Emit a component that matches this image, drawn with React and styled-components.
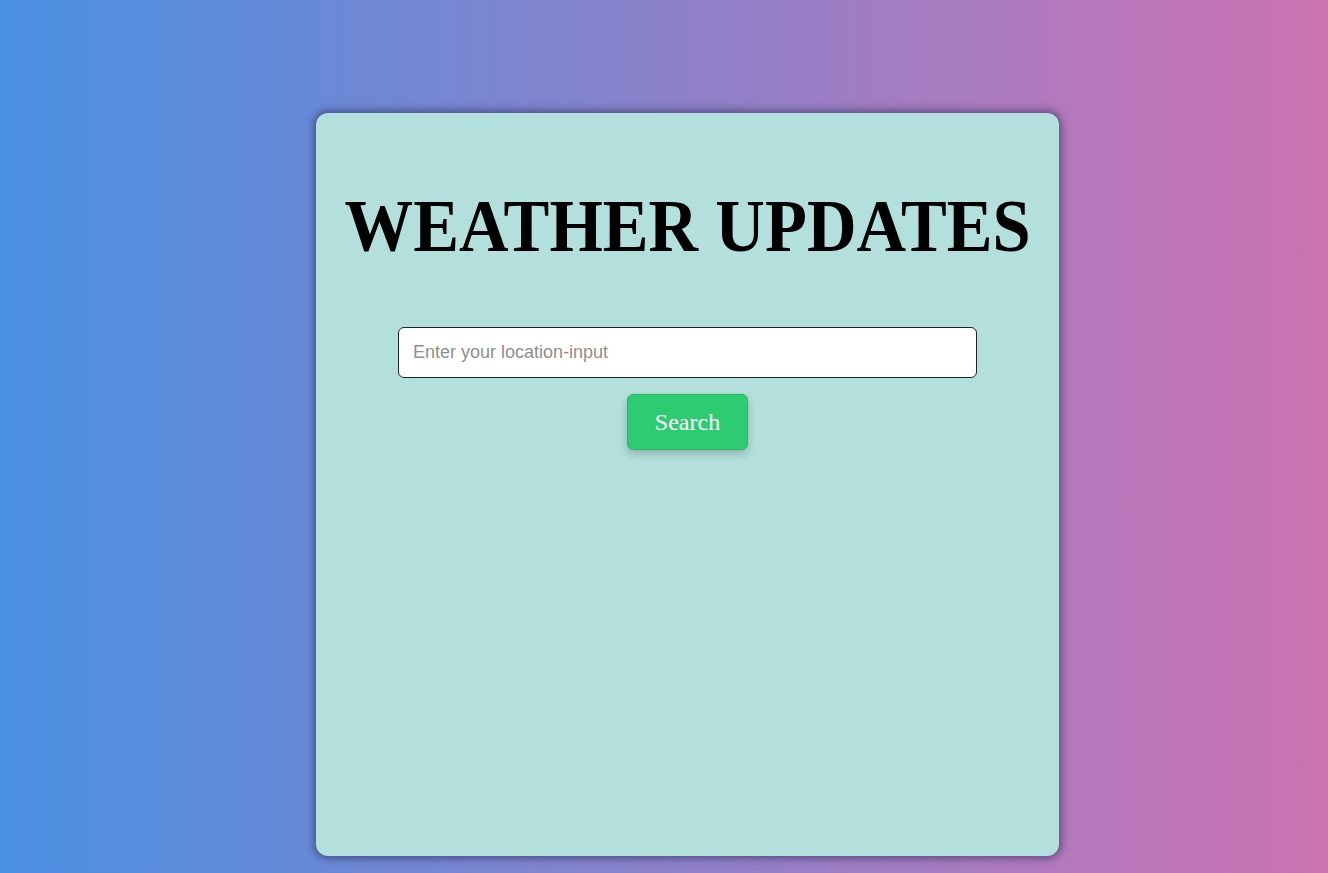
import React from "react";
import styled, { createGlobalStyle } from "styled-components";

const GlobalStyle = createGlobalStyle`
  html, body {
    margin: 0;
    padding: 0;
  }
  body {
    min-height: 873px;
    background: linear-gradient(to right, #4a90e2, #cd73b3);
    font-family: "Liberation Serif", "Times New Roman", serif;
  }
`;

const Page = styled.div`
  display: flex;
  justify-content: center;
  padding: 113px 0 17px 47px;
`;

const Card = styled.div`
  width: 743px;
  height: 743px;
  box-sizing: border-box;
  background: #b3dfdc;
  border-radius: 12px;
  box-shadow: 0 0 9px 2px rgba(35, 35, 75, 0.6);
  display: flex;
  flex-direction: column;
  align-items: center;
  padding-top: 76px;
`;

const Title = styled.h1`
  margin: 0;
  font-family: "Liberation Serif", "Times New Roman", serif;
  font-weight: 700;
  font-size: 74px;
  line-height: 74px;
  color: #000;
  white-space: nowrap;
  transform: scaleX(0.928);
`;

const SearchForm = styled.form`
  display: flex;
  flex-direction: column;
  align-items: center;
  gap: 16px;
  margin-top: 64px;
`;

const LocationInput = styled.input`
  width: 579px;
  height: 51px;
  box-sizing: border-box;
  border: 1px solid #222;
  border-radius: 6px;
  padding: 0 14px;
  background: #fff;
  font-family: "Liberation Sans", Arial, sans-serif;
  font-size: 18px;
  outline: none;

  &::placeholder {
    color: #8f8f8f;
  }
`;

const SearchButton = styled.button`
  width: 121px;
  height: 56px;
  border: 1px solid #27b863;
  border-radius: 6px;
  background: #2ecc71;
  color: #fff;
  font-family: "Liberation Serif", "Times New Roman", serif;
  font-size: 24px;
  cursor: pointer;
  box-shadow: 0 4px 8px rgba(0, 0, 0, 0.2);
`;

const App = () => (
  <>
    <GlobalStyle />
    <Page>
      <Card>
        <Title>WEATHER UPDATES</Title>
        <SearchForm onSubmit={e => e.preventDefault()}>
          <LocationInput type="text" placeholder="Enter your location-input" />
          <SearchButton type="submit">Search</SearchButton>
        </SearchForm>
      </Card>
    </Page>
  </>
);

export default App;
